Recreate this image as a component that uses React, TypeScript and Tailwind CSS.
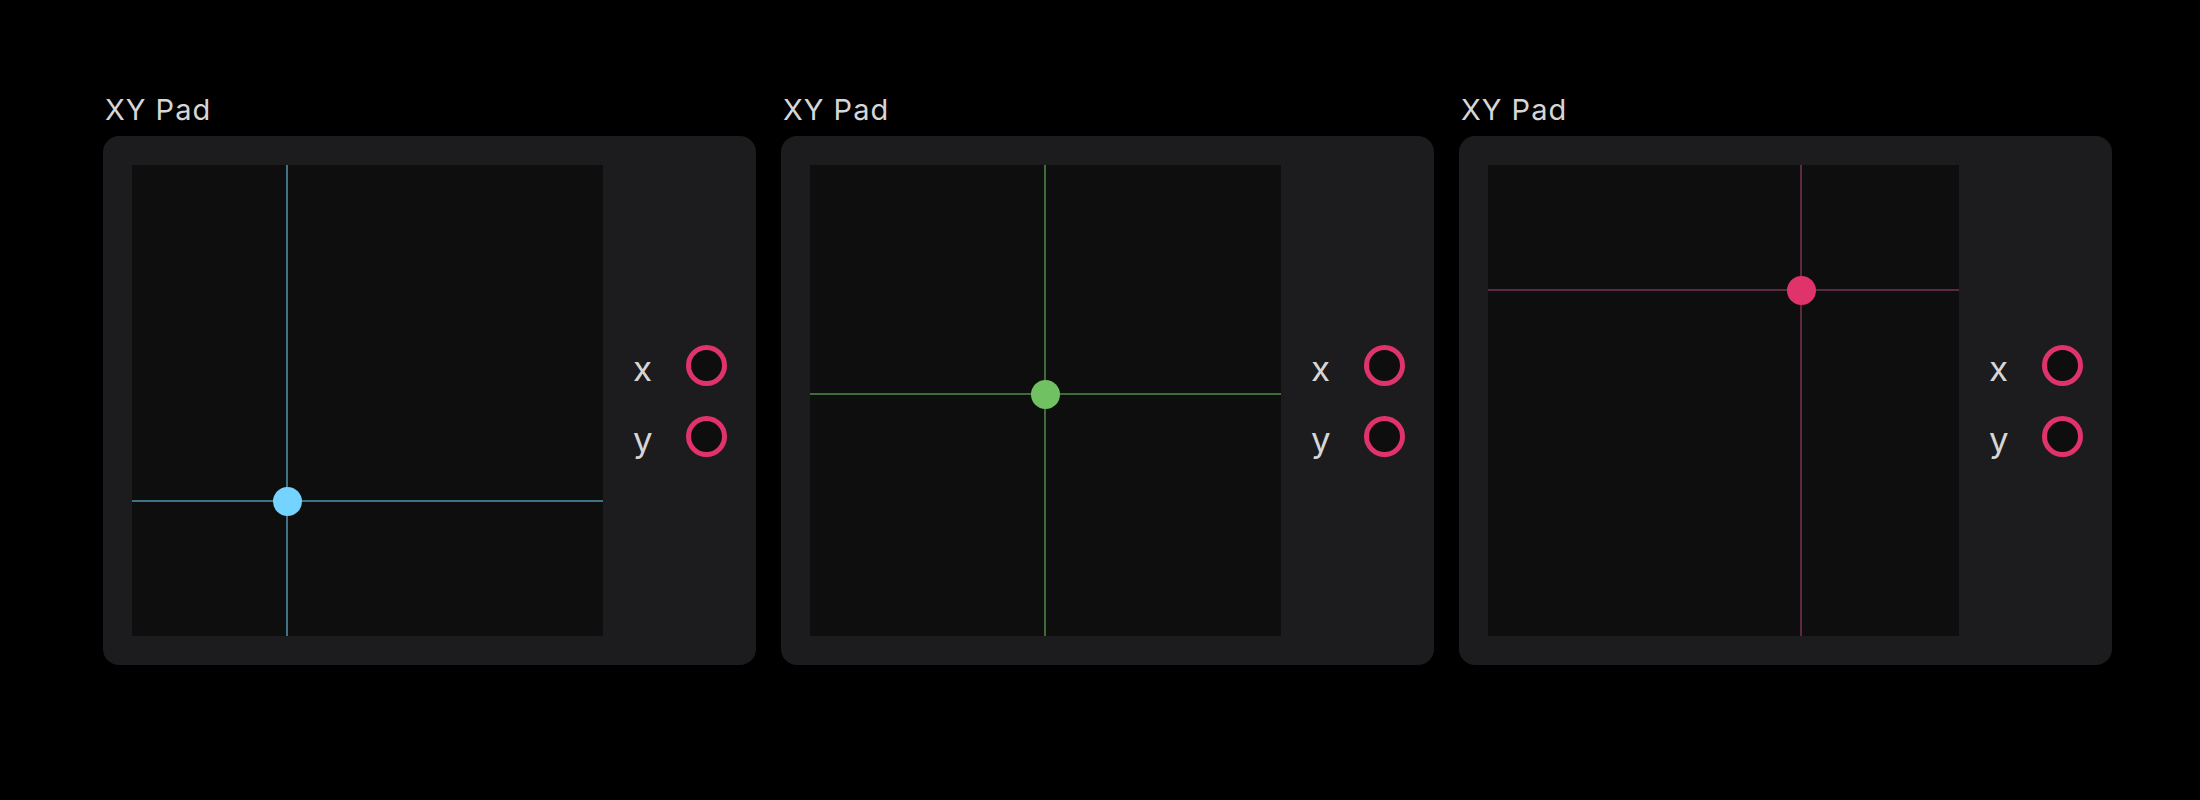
import React from "react";

interface Pad {
  id: number;
  x: number;
  y: number;
  dot: string;
  line: string;
}

const pads: Pad[] = [
  { id: 1, x: 155, y: 336, dot: "#74d4ff", line: "#3f7286" },
  { id: 2, x: 235, y: 229, dot: "#6fc162", line: "#3f6a39" },
  { id: 3, x: 313, y: 125, dot: "#e1336b", line: "#5c2842" },
];

const XYPad: React.FC<{ pad: Pad }> = ({ pad }) => {
  return (
    <div className="flex flex-col">
      <h2 className="pl-[2px] text-[29px] leading-[29px] tracking-[1px] text-[#d6d6d6] mb-[12px]">XY Pad</h2>
      <div className="flex items-center rounded-[16px] bg-[#1c1c1e] p-[29px]">
        {/* pad surface, crosshair and handle sit over it */}
        <div className="relative h-[471px] w-[471px] shrink-0 overflow-hidden bg-[#0e0e0e]">
          <div
            className="absolute inset-x-0 h-[2px]"
            style={{ top: pad.y - 1, backgroundColor: pad.line }}
          />
          <div
            className="absolute inset-y-0 w-[2px]"
            style={{ left: pad.x - 1, backgroundColor: pad.line }}
          />
          <div
            className="absolute h-[29px] w-[29px] rounded-full"
            style={{ left: pad.x - 14.5, top: pad.y - 14.5, backgroundColor: pad.dot }}
          />
        </div>
        <div className="ml-[30px] flex flex-col gap-[30px]">
          {["x", "y"].map((axis) => (
            <div key={axis} className="flex h-[41px] items-center">
              <span className="h-[41px] w-[53px] translate-y-[3px] text-[35px] leading-[41px] text-[#d6d6d6]">
                {axis}
              </span>
              <div className="h-[41px] w-[41px] rounded-full border-[5px] border-[#e1336b] bg-[#0e0e0e]" />
            </div>
          ))}
        </div>
      </div>
    </div>
  );
};

export default function App() {
  return (
    <div
      className="min-h-[800px] w-full bg-black pl-[103px] pt-[95px]"
      style={{ fontFamily: "Inter, 'Noto Sans', sans-serif" }}
    >
      <div className="flex gap-[25px]">
        {pads.map((pad) => (
          <XYPad key={pad.id} pad={pad} />
        ))}
      </div>
    </div>
  );
}
